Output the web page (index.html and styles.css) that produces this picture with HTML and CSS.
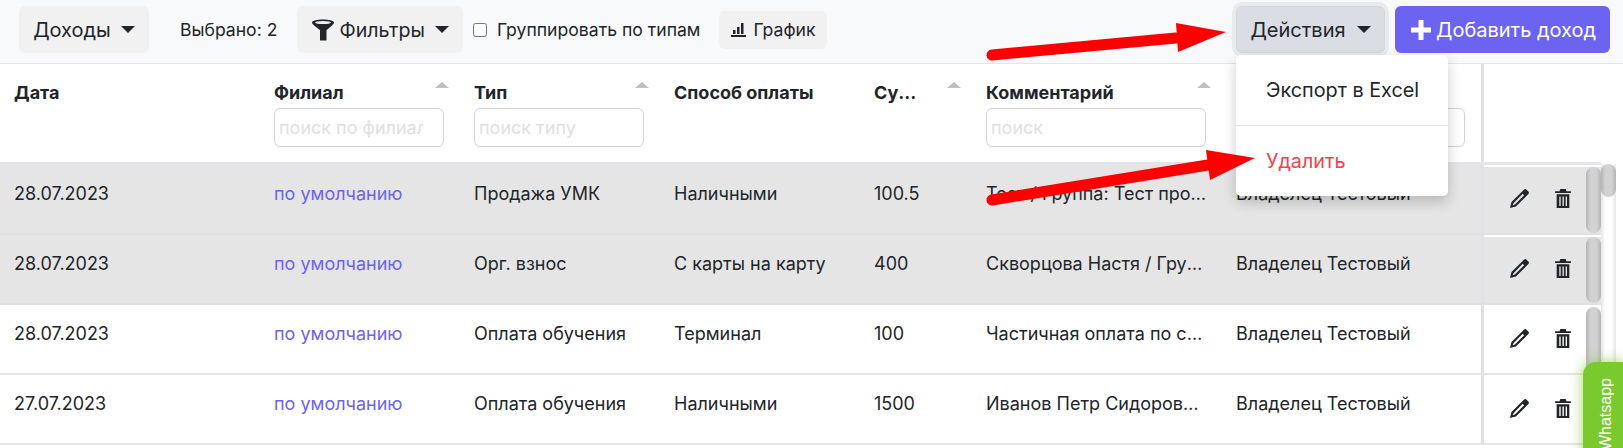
FILE: index.html
```html
<!DOCTYPE html>
<html lang="ru">

<head>
    <meta charset="UTF-8">
    <meta name="viewport" content="width=device-width, initial-scale=1.0">
    <title>Доходы</title>
    <link rel="stylesheet" href="styles.css">
</head>

<body>
    <div class="toolbar">
        <div class="toolbar-left">
            <button class="btn btn-income">Доходы <span class="caret"></span></button>
            <span class="selected">Выбрано: 2</span>
            <button class="btn btn-filters">
                <svg class="icon-funnel" viewBox="0 0 22 22"><path d="M0 3.500C0 1.500 5.500.5 11 .5s11 1 11 3c0 1.700-3.500 4.500-7.500 7.500v10.500H8V11C4 8 0 5.200 0 3.500z"/><ellipse cx="11" cy="3.600" rx="8" ry="1.500" fill="#f1f1f1"/></svg>
                Фильтры <span class="caret"></span>
            </button>
            <label class="group-check"><input type="checkbox"> Группировать по типам</label>
            <button class="btn btn-chart">
                <svg class="icon-chart" viewBox="0 0 15 14"><path d="M0 12h15v2H0zM2 7h2.500v4H2zM6 4h2.500v7H6zM10 0h2.500v11H10z"/></svg>
                График
            </button>
        </div>
        <div class="toolbar-right">
            <button class="btn btn-actions">Действия <span class="caret"></span></button>
            <button class="btn btn-add">
                <svg class="icon-plus" viewBox="0 0 20 20"><path d="M7.500 0h5v7.500H20v5h-7.500V20h-5v-7.500H0v-5h7.500z"/></svg>
                Добавить доход
            </button>
        </div>
    </div>

    <table class="grid">
        <colgroup>
            <col class="c-date"><col class="c-branch"><col class="c-type"><col class="c-pay">
            <col class="c-sum"><col class="c-comment"><col class="c-owner"><col class="c-tools">
        </colgroup>
        <thead>
            <tr>
                <th>Дата</th>
                <th class="sortable">Филиал<input type="text" placeholder="поиск по филиалу"></th>
                <th class="sortable">Тип<input type="text" placeholder="поиск типу"></th>
                <th>Способ оплаты</th>
                <th class="sortable"><span class="cut cut-sum">Сумма</span></th>
                <th class="sortable">Комментарий<input type="text" placeholder="поиск"></th>
                <th>Ответственный<input type="text"></th>
                <th class="tools"></th>
            </tr>
        </thead>
        <tbody>
            <tr class="picked">
                <td>28.07.2023</td>
                <td><a href="#">по умолчанию</a></td>
                <td>Продажа УМК</td>
                <td>Наличными</td>
                <td>100.5</td>
                <td><span class="cut">Тест / Группа: Тест программа</span></td>
                <td>Владелец Тестовый</td>
                <td class="tools"><div class="tools-in"><svg class="icon-pen" viewBox="0 0 18 18"><use href="#pen"/></svg><svg class="icon-bin" viewBox="0 0 15 18"><use href="#bin"/></svg></div></td>
            </tr>
            <tr class="picked">
                <td>28.07.2023</td>
                <td><a href="#">по умолчанию</a></td>
                <td>Орг. взнос</td>
                <td>С карты на карту</td>
                <td>400</td>
                <td><span class="cut">Скворцова Настя / Группа: Тест</span></td>
                <td>Владелец Тестовый</td>
                <td class="tools"><div class="tools-in"><svg class="icon-pen" viewBox="0 0 18 18"><use href="#pen"/></svg><svg class="icon-bin" viewBox="0 0 15 18"><use href="#bin"/></svg></div></td>
            </tr>
            <tr>
                <td>28.07.2023</td>
                <td><a href="#">по умолчанию</a></td>
                <td>Оплата обучения</td>
                <td>Терминал</td>
                <td>100</td>
                <td><span class="cut">Частичная оплата по счету номер</span></td>
                <td>Владелец Тестовый</td>
                <td class="tools"><div class="tools-in"><svg class="icon-pen" viewBox="0 0 18 18"><use href="#pen"/></svg><svg class="icon-bin" viewBox="0 0 15 18"><use href="#bin"/></svg></div></td>
            </tr>
            <tr>
                <td>27.07.2023</td>
                <td><a href="#">по умолчанию</a></td>
                <td>Оплата обучения</td>
                <td>Наличными</td>
                <td>1500</td>
                <td><span class="cut">Иванов Петр Сидорович / Группа</span></td>
                <td>Владелец Тестовый</td>
                <td class="tools"><div class="tools-in"><svg class="icon-pen" viewBox="0 0 18 18"><use href="#pen"/></svg><svg class="icon-bin" viewBox="0 0 15 18"><use href="#bin"/></svg></div></td>
            </tr>
        </tbody>
    </table>

    <div class="outer-scroll"><div class="outer-thumb"></div></div>

    <div class="menu">
        <a class="menu-item" href="#">Экспорт в Excel</a>
        <a class="menu-item menu-danger" href="#">Удалить</a>
    </div>

    <div class="whatsapp"><span>Whatsapp</span></div>

    <svg class="arrows" viewBox="0 0 1623 448">
        <path d="M992 55 1176 38" stroke="#f00" stroke-width="11" stroke-linecap="round"/>
        <path d="M1176 23 1226 32 1178 52z" fill="#f00"/>
        <path d="M992 200 1208 165" stroke="#f00" stroke-width="11" stroke-linecap="round"/>
        <path d="M1206 150 1255 158 1210 180z" fill="#f00"/>
    </svg>

    <svg class="defs" width="0" height="0">
        <symbol id="pen" viewBox="0 0 18 18">
            <path d="M13.200.600c.700-.700 1.800-.700 2.500 0l1.700 1.700c.700.700.700 1.800 0 2.500L5.600 16.600 0 18l1.400-5.600zM3.300 13.400l-.8 2.100 2.100-.8L13.400 6l-1.400-1.400z" fill="#212529"/>
        </symbol>
        <symbol id="bin" viewBox="0 0 15 18">
            <path d="M5 0h5l.8 2.200H15v1.600H0V2.200h4.200zM1.500 5h12v13h-12zM4 7v9h1.300V7zm3 0v9h1.300V7zm3 0v9h1.300V7z" fill="#212529" fill-rule="evenodd"/>
        </symbol>
    </svg>
</body>

</html>
```
FILE: styles.css
```css
html, body {
    height: 100%;
}

body {
    margin: 0;
    position: relative;
    overflow: hidden;
    background: white;
    font-family: Inter, "Noto Sans", sans-serif;
    font-size: 18px;
    color: #212529;
}

.toolbar {
    display: flex;
    justify-content: space-between;
    align-items: center;
    height: 64px;
    box-sizing: border-box;
    padding: 0 13px 4px 19px;
    background: #f8f9fa;
    border-bottom: 1px solid #e3e5e8;
}

.toolbar-left,
.toolbar-right {
    display: flex;
    align-items: center;
}

.btn {
    display: flex;
    align-items: center;
    border: none;
    border-radius: 6px;
    background: #f1f1f1;
    color: #212529;
    font-family: inherit;
    cursor: pointer;
}

.caret {
    display: inline-block;
    width: 0;
    height: 0;
    border-top: 7px solid #212529;
    border-left: 7px solid transparent;
    border-right: 7px solid transparent;
}

.btn-income {
    gap: 10px;
    width: 130px;
    justify-content: center;
    height: 47px;
    font-size: 20px;
}

.selected {
    margin: 0 20px 0 31px;
    font-size: 17.6px;
}

.btn-filters {
    height: 47px;
    padding: 0 14px 0 15px;
    font-size: 19.6px;
}

.icon-funnel {
    width: 22px;
    height: 22px;
    margin-right: 5px;
    fill: #212529;
}

.btn-filters .caret {
    margin-left: 10px;
}

.group-check {
    display: flex;
    align-items: center;
    margin-left: 10px;
    font-size: 17.6px;
}

.group-check input {
    width: 14px;
    height: 14px;
    margin: 0 10px 0 0;
}

.btn-chart {
    gap: 7px;
    height: 38px;
    margin-left: 19px;
    padding: 0 11px 0 12px;
    font-size: 17.6px;
}

.icon-chart {
    width: 15px;
    height: 14px;
    fill: #212529;
}

.btn-actions {
    gap: 11px;
    height: 47px;
    width: 149px;
    justify-content: center;
    border: 1px solid #d3d8de;
    background: #dadde3;
    box-shadow: 0 0 0 4px #e8eaed;
    font-size: 20px;
}

.btn-add {
    height: 47px;
    margin-left: 10px;
    padding: 0 0 0 16px;
    width: 215px;
    background: #6c63f0;
    color: white;
    font-size: 20px;
    white-space: nowrap;
}

.icon-plus {
    flex: none;
    width: 20px;
    height: 20px;
    margin-right: 5px;
    fill: white;
}

.grid {
    width: 1601px;
    table-layout: fixed;
    border-collapse: collapse;
}

.c-date { width: 260px; }
.c-branch { width: 200px; }
.c-type { width: 200px; }
.c-pay { width: 200px; }
.c-sum { width: 112px; }
.c-comment { width: 250px; }
.c-owner { width: 260px; }
.c-tools { width: 119px; }

th {
    position: relative;
    height: 99px;
    padding: 18px 16px 0 14px;
    box-sizing: border-box;
    vertical-align: top;
    text-align: left;
    font-size: 18px;
    font-weight: 700;
    border-bottom: 3px solid #e3e5e8;
}

th.sortable::after {
    content: "";
    position: absolute;
    top: 18px;
    right: 11px;
    border-bottom: 6px solid #c0c0c0;
    border-left: 7px solid transparent;
    border-right: 7px solid transparent;
}

th input {
    display: block;
    width: 100%;
    height: 39px;
    box-sizing: border-box;
    margin-top: 5px;
    padding: 0 20px 0 4px;
    border: 1px solid #ced4da;
    border-radius: 6px;
    font-family: inherit;
    font-size: 18px;
}

th input::placeholder {
    color: #e0e0e0;
}

td {
    height: 69.8px;
    padding: 18px 14px 0;
    box-sizing: border-box;
    vertical-align: top;
    border-bottom: 2px solid #e3e5e8;
    line-height: 22px;
}

.picked td {
    background: #e5e5e5;
    border-bottom-color: #e1e1e1;
}

td a {
    color: #6c63f0;
    text-decoration: none;
}

.cut {
    display: block;
    white-space: nowrap;
    overflow: hidden;
    text-overflow: ellipsis;
}

.cut-sum {
    width: 44px;
}

th.tools,
td.tools {
    padding: 0;
    border-left: 3px solid #dee2e6;
    background: white;
}

.tools-in {
    position: relative;
    display: flex;
    gap: 26px;
    align-items: center;
    height: 66px;
    margin-top: 2px;
    padding: 0 0 3px 26px;
    box-sizing: border-box;
}

.picked .tools-in {
    background: #e5e5e5;
}

.tools-in::after {
    content: "";
    position: absolute;
    top: 0;
    bottom: 0;
    right: 0;
    width: 15px;
    border-radius: 8px;
    background: linear-gradient(90deg, #b4b4b4, #d2d2d2 30%, #d2d2d2 70%, #b4b4b4);
}

.icon-pen {
    width: 19px;
    height: 19px;
}

.icon-bin {
    width: 16px;
    height: 19px;
}

.defs {
    position: absolute;
}

.outer-scroll {
    position: absolute;
    top: 164px;
    bottom: 0;
    left: 1601px;
    width: 15px;
    background: linear-gradient(90deg, #e6e6e6, white 30%, white 70%, #e6e6e6);
}

.outer-thumb {
    height: 33px;
    border-radius: 8px;
    background: linear-gradient(90deg, #b4b4b4, #d2d2d2 30%, #d2d2d2 70%, #b4b4b4);
}

.menu {
    position: absolute;
    top: 55px;
    left: 1236px;
    width: 212px;
    height: 141px;
    display: flex;
    flex-direction: column;
    border-radius: 5px;
    background: white;
    box-shadow: 0 6px 14px rgba(0, 0, 0, 0.2);
}

.menu-item {
    display: flex;
    align-items: center;
    height: 70px;
    padding-left: 30px;
    color: #212529;
    font-size: 19.8px;
    text-decoration: none;
}

.menu-danger {
    color: #f8404c;
    border-top: 1px solid #e3e5e8;
    padding-left: 30px;
}

.whatsapp {
    position: absolute;
    top: 362px;
    left: 1583px;
    width: 40px;
    height: 100px;
    border-radius: 13px 0 0 0;
    background: #7ac92f;
    box-shadow: 0 0 12px 2px rgba(122, 201, 47, 0.55);
    color: white;
    font-family: "Liberation Sans", Arial, sans-serif;
    font-size: 16px;
}

.whatsapp span {
    position: absolute;
    top: 16px;
    left: 14px;
    writing-mode: vertical-rl;
    transform: rotate(180deg);
}

.arrows {
    position: absolute;
    top: 0;
    left: 0;
    width: 1623px;
    height: 448px;
    pointer-events: none;
}
```
